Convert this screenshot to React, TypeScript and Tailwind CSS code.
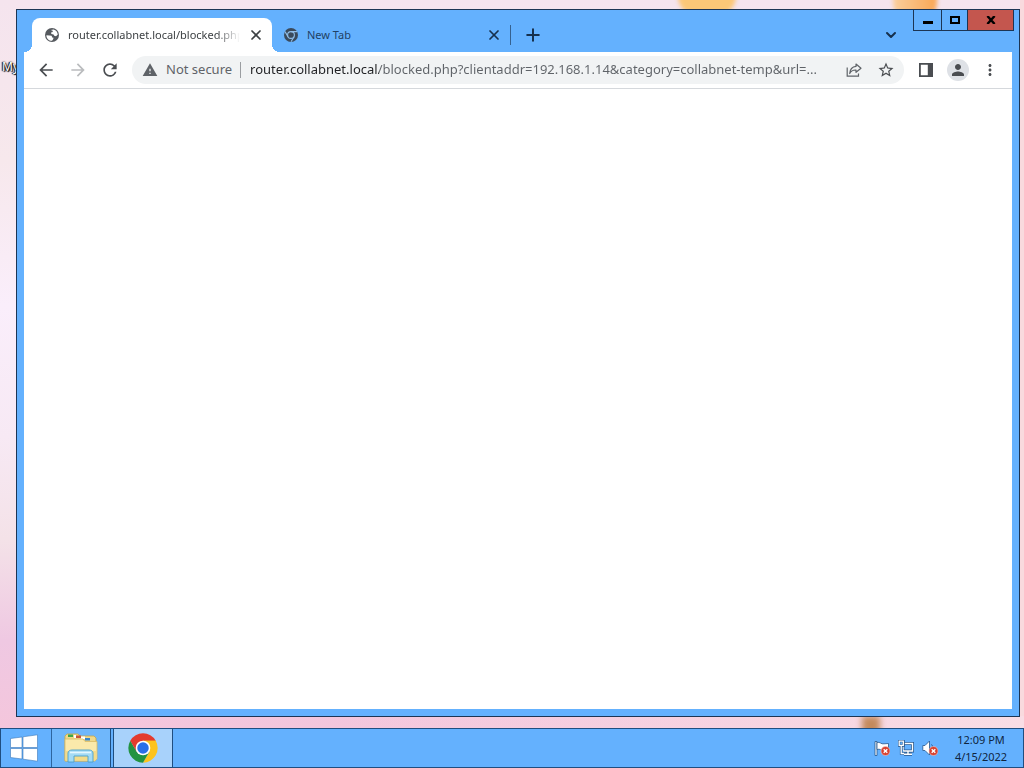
import React from 'react';
import { ChevronDown, Plus, X } from 'lucide-react';
import {
  MdArrowBack,
  MdArrowForward,
  MdMoreVert,
  MdPerson,
  MdRefresh,
  MdStarBorder,
  MdWarning,
} from 'react-icons/md';

const PAGE_URL = 'router.collabnet.local/blocked.php?clientaddr=192.168.1.14&category=collabnet-temp&url=...';

const GlobeIcon: React.FC = () => (
  <svg viewBox="0 0 16 16" className="w-4 h-4 shrink-0" aria-hidden="true">
    <circle cx="8" cy="8" r="7" fill="#55595e" />
    <path
      d="M2.4 8.2 5.4 8.6 7.6 8.8 8.2 10.4 9.6 10.8 9 12.4 8 13.8C4.8 13.8 2.4 11.4 2.4 8.2Z"
      fill="#fff"
    />
    <path d="M6.8 3 9.6 2.4C12 3 13.6 5 13.8 7.6L12 9.2 10.2 8.8 9.6 7.4 7.4 7 7 5.6 8.8 5 8.6 3.8Z" fill="#fff" />
  </svg>
);

const ChromeMono: React.FC = () => (
  <svg viewBox="0 0 16 16" className="w-4 h-4 shrink-0" aria-hidden="true">
    <circle cx="8" cy="8" r="7" fill="#3a4a5c" />
    <g fill="none" stroke="#8fbde8" strokeWidth="1.1">
      <circle cx="8" cy="8" r="3.4" />
      <path d="M8 4.6H14M5 9.6 2 4.6M11 9.7 8 14.8" />
    </g>
    <circle cx="8" cy="8" r="2" fill="#3a4a5c" />
  </svg>
);

const ChromeLogo: React.FC = () => (
  <svg viewBox="0 0 48 48" className="w-8 h-8" aria-hidden="true">
    <path d="M24 24 4.95 13A22 22 0 0 1 43.05 13Z" fill="#e33b2e" />
    <path d="M43.05 13A22 22 0 0 1 24 46L33.5 29.5 24 13Z" fill="#fcc31e" />
    <path d="M24 46A22 22 0 0 1 4.95 13L14.5 29.5 24 35 33.5 29.5Z" fill="#229342" />
    <path d="M24 13H43.05L33.5 29.5Z" fill="#fcc31e" />
    <path d="M4.95 13 14.5 29.5 24 13Z" fill="#e33b2e" />
    <path d="M4.95 13 14.5 29.5 24 35 20 40Z" fill="#229342" />
    <circle cx="24" cy="24" r="11" fill="#fff" />
    <circle cx="24" cy="24" r="8.6" fill="#2a6fe8" />
  </svg>
);

const WindowsLogo: React.FC = () => (
  <svg viewBox="0 0 28 28" className="w-7 h-7" fill="#fff" stroke="#3d78b8" strokeWidth="0.6" aria-hidden="true">
    <path d="M.5 4.5 12 3V13.5H.5ZM13 2.8 27.5.8V13.5H13ZM.5 14.5H12V25L.5 23.5ZM13 14.5H27.5V27.2L13 25.2Z" />
  </svg>
);

const FolderIcon: React.FC = () => (
  <svg viewBox="0 0 36 32" className="w-9 h-8" aria-hidden="true">
    <path d="M2 4 4 2H15L17 4H31L33 6V27L31 29H2Z" fill="#f1d98a" stroke="#c9a648" strokeWidth="0.8" />
    <path d="M5 2.5H10V5H5Z" fill="#3fa648" />
    <path d="M13 3.5H18V6H13Z" fill="#c8553c" />
    <path d="M11 3H13V6H11ZM18 4.5H22V7H18Z" fill="#fff" />
    <path d="M22 6H27V8.5H22Z" fill="#3a86c8" />
    <path d="M2 7H20L22 9.5H34V27L32 29H2Z" fill="#fae9ab" stroke="#d9bb66" strokeWidth="0.8" />
    <path d="M3 19H33V28H3Z" fill="#f4dc8a" />
    <path
      d="M5 30V21C5 19 7 18 9 18H26C28 18 30 19 30 21V30H25V24H11V30Z"
      fill="#a4dbf5"
      stroke="#4b9fcc"
      strokeWidth="0.9"
    />
    <path d="M7 20.5H28" stroke="#e4f7ff" strokeWidth="1.6" />
  </svg>
);

const ErrorBadge: React.FC = () => (
  <g>
    <circle cx="11.5" cy="11" r="4.5" fill="#d8402f" stroke="#f6c9c2" strokeWidth="0.6" />
    <path d="M9.7 9.2 13.3 12.8M13.3 9.2 9.7 12.8" stroke="#fff" strokeWidth="1.4" />
  </g>
);

const FlagIcon: React.FC = () => (
  <svg viewBox="0 0 16 16" className="w-4 h-4" aria-hidden="true">
    <path d="M1 1.5H3V15.5H1Z" fill="#fff" stroke="#27578c" strokeWidth="0.8" />
    <path d="M3 2.5C6 1.5 7 4.5 10 3.8L14.5 3.5V10H9C7 10.5 6 8.5 3 9.5Z" fill="#fff" stroke="#27578c" strokeWidth="0.8" />
    <ErrorBadge />
  </svg>
);

const NetworkIcon: React.FC = () => (
  <svg viewBox="0 0 16 16" className="w-4 h-4" fill="none" aria-hidden="true">
    <path d="M5 3.5H14.5V11H5ZM10 11V14M6 14.2H14" stroke="#27578c" strokeWidth="3" />
    <path d="M5 3.5H14.5V11H5ZM10 11V14M6 14.2H14" stroke="#fff" strokeWidth="1.4" />
    <path d="M1 1H5.5V5.5H1ZM3.2 5.5V13.5H6" fill="#64b1fc" stroke="#27578c" strokeWidth="2.6" />
    <path d="M1.2 1.2H5.3V5.3H1.2ZM3.2 5.5V13.5H6" stroke="#fff" strokeWidth="1.3" />
  </svg>
);

const SpeakerIcon: React.FC = () => (
  <svg viewBox="0 0 16 16" className="w-4 h-4" aria-hidden="true">
    <path d="M.8 5.5H3L7.5 1V15L3 10.5H.8Z" fill="#fff" stroke="#27578c" strokeWidth="0.8" />
    <path d="M9.5 4.5C10.5 5.5 10.5 6.5 10.5 7" fill="none" stroke="#27578c" />
    <ErrorBadge />
  </svg>
);

const ShareIcon: React.FC = () => (
  <svg viewBox="0 0 16 16" className="w-4 h-4" fill="none" stroke="#5f6368" strokeWidth="1.2" aria-hidden="true">
    <path d="M1.2 5.5V14.2H12.5V11.5" />
    <path d="M10 2 15 6.2 10 10.3V8C7 7.8 5 9 3.7 11.5 4 7.5 6 4.8 10 4.4Z" strokeLinejoin="round" />
  </svg>
);

const SidePanelIcon: React.FC = () => (
  <svg viewBox="0 0 16 16" className="w-4 h-4" aria-hidden="true">
    <path d="M1 1H15V15H1ZM2.8 2.8V13.2H9.8V2.8Z" fill="#4a4d51" fillRule="evenodd" />
  </svg>
);

interface ToolButtonProps {
  label: string;
  disabled?: boolean;
  className?: string;
  children: React.ReactNode;
}

const ToolButton: React.FC<ToolButtonProps> = ({ label, disabled, className = '', children }) => (
  <button
    type="button"
    aria-label={label}
    disabled={disabled}
    className={`w-7 h-7 shrink-0 flex items-center justify-center rounded-full ${className}`}
  >
    {children}
  </button>
);

const TabStrip: React.FC = () => (
  <div className="h-[42px] pl-2 flex items-end text-[11px] text-[#3c4043]">
    <div className="relative w-60 h-[34px] pl-3 pr-2 flex items-center gap-2 bg-white rounded-t-lg">
      {/* Flared bottom corners */}
      <span className="absolute bottom-0 -left-2 w-2 h-2 bg-[radial-gradient(circle_at_0_0,transparent_8px,white_8px)]" />
      <span className="absolute bottom-0 -right-2 w-2 h-2 bg-[radial-gradient(circle_at_100%_0,transparent_8px,white_8px)]" />
      <GlobeIcon />
      <span className="flex-1 min-w-0 whitespace-nowrap [mask-image:linear-gradient(to_right,black_86%,transparent)]">
        router.collabnet.local/blocked.php
      </span>
      <button type="button" aria-label="Close tab">
        <X size={16} strokeWidth={2.6} />
      </button>
    </div>
    <div className="-ml-px w-60 h-[34px] pl-3 flex items-center gap-2 text-[#1f4166]">
      <ChromeMono />
      <span className="flex-1 min-w-0 truncate">New Tab</span>
      <button type="button" aria-label="Close tab" className="text-[#16304d]">
        <X size={16} strokeWidth={2.6} />
      </button>
      <span className="w-px h-5 bg-[#35618f]" />
    </div>
    <button type="button" aria-label="New tab" className="ml-2 w-7 h-[34px] flex items-center justify-center text-[#16304d]">
      <Plus size={20} strokeWidth={2.4} />
    </button>
    <button
      type="button"
      aria-label="Search tabs"
      className="ml-auto mr-[107px] w-7 h-[34px] flex items-center justify-center text-[#16304d]"
    >
      <ChevronDown size={16} strokeWidth={3} />
    </button>
  </div>
);

const Toolbar: React.FC = () => (
  <div className="h-[37px] px-2 flex items-center gap-1 bg-white border-b border-[#d5d8dc] text-[#4a4d51]">
    <ToolButton label="Back">
      <MdArrowBack size={20} />
    </ToolButton>
    <ToolButton label="Forward" disabled className="text-[#babcbe]">
      <MdArrowForward size={20} />
    </ToolButton>
    <ToolButton label="Reload">
      <MdRefresh size={20} />
    </ToolButton>
    <div className="mx-1 h-7 flex-1 min-w-0 pl-[10px] pr-1 flex items-center rounded-full bg-[#f1f3f4] text-[13px]">
      <button type="button" className="flex items-center gap-2 whitespace-nowrap text-[#5f6368]">
        <MdWarning size={16} />
        Not secure
      </button>
      <span className="ml-2 mr-[9px] w-px h-4 bg-[#9a9da1]" />
      <input
        aria-label="Address and search bar"
        defaultValue={PAGE_URL}
        spellCheck={false}
        className="flex-1 min-w-0 bg-[linear-gradient(to_right,#202124_129px,#5f6368_129px)] bg-clip-text text-transparent outline-none"
      />
      <div className="flex gap-1">
        <ToolButton label="Share this page">
          <ShareIcon />
        </ToolButton>
        <ToolButton label="Bookmark this tab">
          <MdStarBorder size={18} />
        </ToolButton>
      </div>
    </div>
    <ToolButton label="Side panel">
      <SidePanelIcon />
    </ToolButton>
    <ToolButton label="Profile">
      <span className="w-[22px] h-[22px] flex items-center justify-center rounded-full bg-[#dee1e6]">
        <MdPerson size={18} />
      </span>
    </ToolButton>
    <ToolButton label="Menu">
      <MdMoreVert size={18} />
    </ToolButton>
  </div>
);

const CaptionButtons: React.FC = () => (
  <div className="absolute -top-px right-[5px] h-[22px] flex border border-[#1c3554] text-black">
    <button type="button" aria-label="Minimize" className="w-[27px] flex items-center justify-center">
      <span className="mt-1 w-[10px] h-[3px] bg-black" />
    </button>
    <button type="button" aria-label="Maximize" className="w-[26px] flex items-center justify-center border-l border-[#1c3554]">
      <span className="w-[10px] h-2 border-2 border-black" />
    </button>
    <button
      type="button"
      aria-label="Close"
      className="w-[46px] flex items-center justify-center border-l border-[#1c3554] bg-[#c4564e]"
    >
      <svg viewBox="0 0 10 8" className="w-[10px] h-2" stroke="#000" strokeWidth="2.4" aria-hidden="true">
        <path d="M1.4 0 8.6 8M8.6 0 1.4 8" />
      </svg>
    </button>
  </div>
);

const BrowserWindow: React.FC = () => (
  <section className="absolute top-[9px] left-4 right-1 bottom-[11px] flex flex-col px-[7px] pb-[7px] bg-[#64b1fe] border border-[#1c3554]">
    <TabStrip />
    <Toolbar />
    <main className="flex-1 bg-white" />
    <CaptionButtons />
  </section>
);

const Taskbar: React.FC = () => (
  <footer className="h-10 flex bg-[#64b1fe] border border-[#1f4e80]">
    <button type="button" aria-label="Start" className="w-[51px] flex items-center justify-center border-r border-[#2d659f]">
      <span className="-ml-1">
        <WindowsLogo />
      </span>
    </button>
    <button
      type="button"
      aria-label="File Explorer"
      className="w-[59px] flex items-center justify-center bg-[#6fb7fb] border-r border-[#1f4e80]"
    >
      <FolderIcon />
    </button>
    <button
      type="button"
      aria-label="Google Chrome"
      className="ml-[2px] w-[60px] flex items-center justify-center bg-[#a8d2fb] border-x border-[#1f4e80]"
    >
      <ChromeLogo />
    </button>
    <div className="ml-auto pr-[7px] flex items-center gap-2 text-[#0f2540]">
      <button type="button" aria-label="Action Center">
        <FlagIcon />
      </button>
      <button type="button" aria-label="Network">
        <NetworkIcon />
      </button>
      <button type="button" aria-label="Volume">
        <SpeakerIcon />
      </button>
      <time className="w-[70px] text-center text-[11px] leading-[17px]">
        12:09 PM
        <br />
        4/15/2022
      </time>
    </div>
  </footer>
);

export default function App() {
  return (
    <div className="h-screen flex flex-col overflow-hidden font-['Noto_Sans',sans-serif]">
      <div className="relative flex-1 overflow-hidden bg-[linear-gradient(to_bottom,#f5e4ee,#f7e8ec_22%,#faeefb_42%,#f7e9f4_60%,#f4e2e8_74%,#efc8e2_88%,#f4c6dc)]">
        {/* Wallpaper shapes showing around the window */}
        <div className="absolute inset-y-0 right-0 w-1 bg-[#f9dade]" />
        <div className="absolute bottom-0 right-0 w-2/3 h-3 bg-[linear-gradient(to_right,transparent,#f9dde5)]" />
        <div className="absolute -top-6 left-[678px] w-[58px] h-10 rounded-full bg-[#fbc777] blur-[2px]" />
        <div className="absolute -top-6 left-[893px] w-11 h-12 rounded-full bg-[linear-gradient(to_right,#f9cf9d,#f9a654)] blur-[2px]" />
        <div className="absolute -bottom-2 left-[862px] w-[18px] h-5 bg-[#c48a5c] blur-[3px]" />
        <span className="absolute top-[59px] left-[2px] text-xs text-white [text-shadow:0_0_2px_black,1px_1px_1px_black,-1px_0_1px_black]">
          My
        </span>
        <BrowserWindow />
      </div>
      <Taskbar />
    </div>
  );
}
